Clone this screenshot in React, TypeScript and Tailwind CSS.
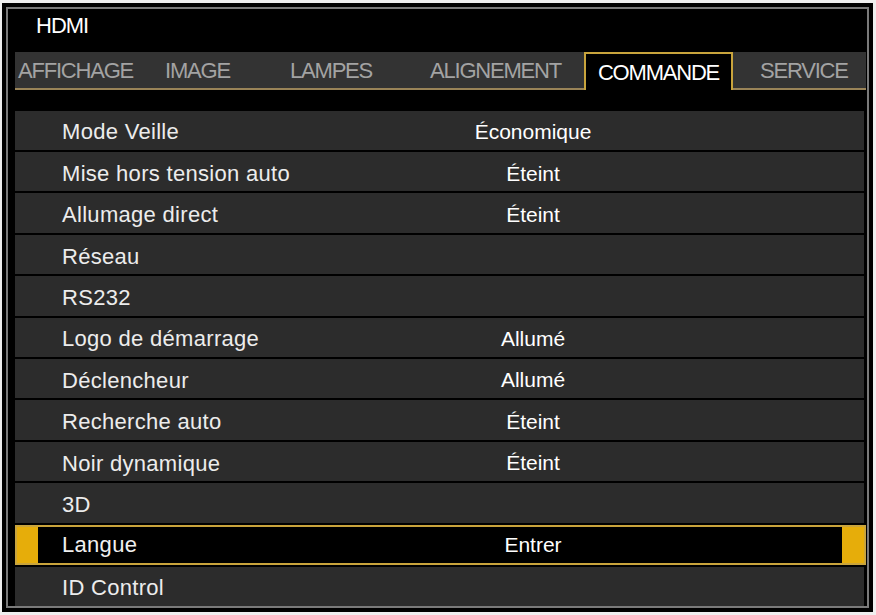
const tabs = [
  { label: "AFFICHAGE", w: "w-[135px]", pl: "pl-[3px]" },
  { label: "IMAGE", w: "w-[120px]", pl: "pl-[15px]" },
  { label: "LAMPES", w: "w-[140px]", pl: "pl-[20px]" },
  { label: "ALIGNEMENT", w: "w-[174px]", pl: "pl-[20px]" },
  { label: "COMMANDE", w: "w-[149px]", pl: "", active: true },
  { label: "SERVICE", w: "flex-1", pl: "pl-[27px]" },
];

const rows: { label: string; value?: string; selected?: boolean }[] = [
  { label: "Mode Veille", value: "Économique" },
  { label: "Mise hors tension auto", value: "Éteint" },
  { label: "Allumage direct", value: "Éteint" },
  { label: "Réseau" },
  { label: "RS232" },
  { label: "Logo de démarrage", value: "Allumé" },
  { label: "Déclencheur", value: "Allumé" },
  { label: "Recherche auto", value: "Éteint" },
  { label: "Noir dynamique", value: "Éteint" },
  { label: "3D" },
  { label: "Langue", value: "Entrer", selected: true },
  { label: "ID Control" },
];

export default function App() {
  return (
    <div
      className="w-[876px] h-[615px] bg-[#efefef] pt-[3px] pl-[2px] pr-[3px] pb-[3px]"
      style={{ fontFamily: '"Liberation Sans", Arial, sans-serif' }}
    >
      <div className="h-full bg-black p-[4px]">
        <div className="h-full border-2 border-[#7a7a7a] flex flex-col">
          {/* Source */}
          <div className="h-[43px] pl-[28px] pb-[10px] flex items-center text-[22px] text-white tracking-[-1px]">
            HDMI
          </div>

          {/* Tabs */}
          <div className="ml-[7px] mr-[1px] h-[38px] flex bg-[#333333]">
            {tabs.map((t) =>
              t.active ? (
                <div
                  key={t.label}
                  className={`${t.w} h-full bg-black border-2 border-b-0 border-[#c9a43c] flex items-center justify-center pt-[2px] text-[22px] text-white tracking-[-1.2px]`}
                >
                  {t.label}
                </div>
              ) : (
                <div
                  key={t.label}
                  className={`${t.w} ${t.pl} h-full border-b-2 border-[#9a8458] flex items-center pt-[2px] text-[22px] text-[#a3a3a3] tracking-[-1.2px]`}
                >
                  {t.label}
                </div>
              )
            )}
          </div>

          {/* Menu rows */}
          <div className="mt-[21px] ml-[7px] mr-[3px] flex flex-col gap-[2px]">
            {rows.map((r) =>
              r.selected ? (
                <div
                  key={r.label}
                  className="h-[40px] flex items-stretch bg-black border-2 border-[#c9a43c] -mr-[2px]"
                >
                  <div className="w-[21px] bg-[#e6ad0a]" />
                  <div className="w-[395px] pl-[24px] flex items-center text-[22px] tracking-[0.3px] text-[#f0f0f0]">
                    {r.label}
                  </div>
                  <div className="w-[200px] flex items-center justify-center text-[21px] text-white">
                    {r.value}
                  </div>
                  <div className="flex-1" />
                  <div className="w-[22px] bg-[#e6ad0a]" />
                </div>
              ) : (
                <div key={r.label} className="h-[39.4px] flex items-center pt-[3px] bg-[#2c2c2c]">
                  <div className="w-[418px] pl-[47px] text-[22px] tracking-[0.3px] text-[#ececec]">
                    {r.label}
                  </div>
                  <div className="w-[200px] text-center text-[21px] text-white">{r.value}</div>
                </div>
              )
            )}
          </div>
        </div>
      </div>
    </div>
  );
}
